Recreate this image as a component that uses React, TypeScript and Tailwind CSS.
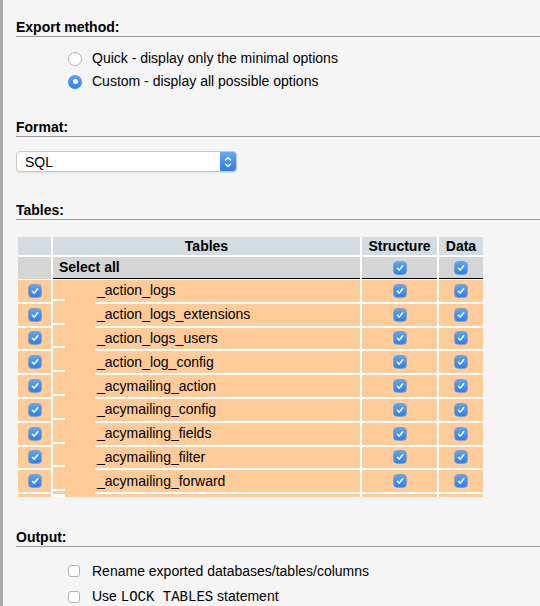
import React from "react";

const ORANGE = "bg-[#ffcc99]";

function Check() {
  return (
    <span className="inline-flex h-[12px] w-[12px] items-center justify-center rounded-[3px] bg-gradient-to-b from-[#5aa5f7] to-[#2f7fe6] shadow-[0_0_0_0.5px_#2a6fca]">
      <svg width="10" height="10" viewBox="0 0 10 10">
        <path d="M2.4 5.3 L4.2 7.1 L7.7 2.8" fill="none" stroke="white" strokeWidth="1.5" strokeLinecap="round" strokeLinejoin="round" />
      </svg>
    </span>
  );
}

function Heading({ children, mt }: { children: React.ReactNode; mt: string }) {
  return (
    <div className={`${mt} border-b border-[#9b9b9b] text-[14px] font-bold leading-[18px] text-black`}>{children}</div>
  );
}

const names = [
  "_action_logs",
  "_action_logs_extensions",
  "_action_logs_users",
  "_action_log_config",
  "_acymailing_action",
  "_acymailing_config",
  "_acymailing_fields",
  "_acymailing_filter",
  "_acymailing_forward",
];

export default function App() {
  return (
    <div
      className="min-h-[606px] w-[540px] overflow-hidden border-l-[3px] border-[#ababab] bg-[#f5f5f5] pl-[13px] text-[14px] text-black"
      style={{ fontFamily: '"Liberation Sans", Arial, sans-serif' }}
    >
      <Heading mt="pt-[18px]">Export method:</Heading>
      <div className="mt-[10px] flex flex-col pl-[52px]">
        <div className="flex h-[23px] items-center">
          <span className="h-[14px] w-[14px] rounded-full border border-[#b5b5b5] bg-white" />
          <span className="ml-[10px]">Quick - display only the minimal options</span>
        </div>
        <div className="flex h-[23px] items-center">
          <span className="flex h-[14px] w-[14px] items-center justify-center rounded-full bg-gradient-to-b from-[#5aa5f7] to-[#2f7fe6]">
            <span className="h-[5px] w-[5px] rounded-full bg-white" />
          </span>
          <span className="ml-[10px]">Custom - display all possible options</span>
        </div>
      </div>

      <Heading mt="mt-[25px]">Format:</Heading>
      <div className="mt-[14px] flex h-[21px] w-[221px] overflow-hidden rounded-[4px] border border-[#c8c8c8] bg-white shadow-[0_1px_1px_rgba(0,0,0,0.08)]">
        <div className="flex flex-1 items-center pl-[8px] leading-none">SQL</div>
        <div className="flex w-[16px] items-center justify-center bg-gradient-to-b from-[#63a9f8] to-[#2d7ce6]">
          <svg width="10" height="14" viewBox="0 0 10 14">
            <path d="M2.5 5 L5 2.5 L7.5 5" fill="none" stroke="white" strokeWidth="1.3" strokeLinecap="round" strokeLinejoin="round" />
            <path d="M2.5 9 L5 11.5 L7.5 9" fill="none" stroke="white" strokeWidth="1.3" strokeLinecap="round" strokeLinejoin="round" />
          </svg>
        </div>
      </div>

      <Heading mt="mt-[29px]">Tables:</Heading>
      <div className="ml-[2px] mt-[17px] flex w-[465px] flex-col gap-y-[2px] bg-white">
        <div className="grid h-[18px] grid-cols-[33px_307px_75px_44px] gap-x-[2px] font-bold leading-[18px]">
          <div className="bg-[#d3dce3]" />
          <div className="bg-[#d3dce3] text-center">Tables</div>
          <div className="bg-[#d3dce3] text-center">Structure</div>
          <div className="bg-[#d3dce3] text-center">Data</div>
        </div>
        <div className="grid h-[21px] grid-cols-[33px_307px_75px_44px] gap-x-[2px]">
          <div className="bg-[#d5d5d5]" />
          <div className="flex items-center border-b border-black bg-[#d5d5d5] pl-[6px] font-bold">Select all</div>
          <div className="flex items-center justify-center border-b border-black bg-[#d5d5d5]"><Check /></div>
          <div className="flex items-center justify-center border-b border-black bg-[#d5d5d5]"><Check /></div>
        </div>
        {names.map((n, i) => (
          <div key={n} className="grid h-[21.8px] grid-cols-[33px_307px_75px_44px] gap-x-[2px]">
            <div className={`flex items-center justify-center ${ORANGE}`}><Check /></div>
            <div className="flex">
              <div className={`w-[12px] ${ORANGE} ${i === 0 ? "h-[calc(100%-3px)]" : "h-full -translate-y-[3px]"}`} />
              <div className={`w-[30px] ${ORANGE} h-[calc(100%+2px)]`} />
              <div className={`flex flex-1 items-center pl-[2px] ${ORANGE}`}>{n}</div>
            </div>
            <div className={`flex items-center justify-center ${ORANGE}`}><Check /></div>
            <div className={`flex items-center justify-center ${ORANGE}`}><Check /></div>
          </div>
        ))}
        <div className="grid h-[3px] grid-cols-[33px_307px_75px_44px] gap-x-[2px]">
          <div className={ORANGE} />
          <div className="flex">
            <div className={`w-[12px] h-full -translate-y-[3px] ${ORANGE}`} />
            <div className={`w-[30px] ${ORANGE}`} />
            <div className={`flex-1 ${ORANGE}`} />
          </div>
          <div className={ORANGE} />
          <div className={ORANGE} />
        </div>
      </div>

      <Heading mt="mt-[31px]">Output:</Heading>
      <div className="mt-[11px] flex flex-col pl-[52px]">
        <div className="flex h-[26px] items-center">
          <span className="h-[12px] w-[12px] rounded-[3px] border border-[#b0b0b0] bg-white" />
          <span className="ml-[12px]">Rename exported databases/tables/columns</span>
        </div>
        <div className="flex h-[26px] items-center">
          <span className="h-[12px] w-[12px] rounded-[3px] border border-[#b0b0b0] bg-white" />
          <span className="ml-[12px]">
            Use <code style={{ fontFamily: '"Liberation Mono", "Courier New", monospace' }} className="text-[14px]">LOCK TABLES</code> statement
          </span>
        </div>
      </div>
    </div>
  );
}
